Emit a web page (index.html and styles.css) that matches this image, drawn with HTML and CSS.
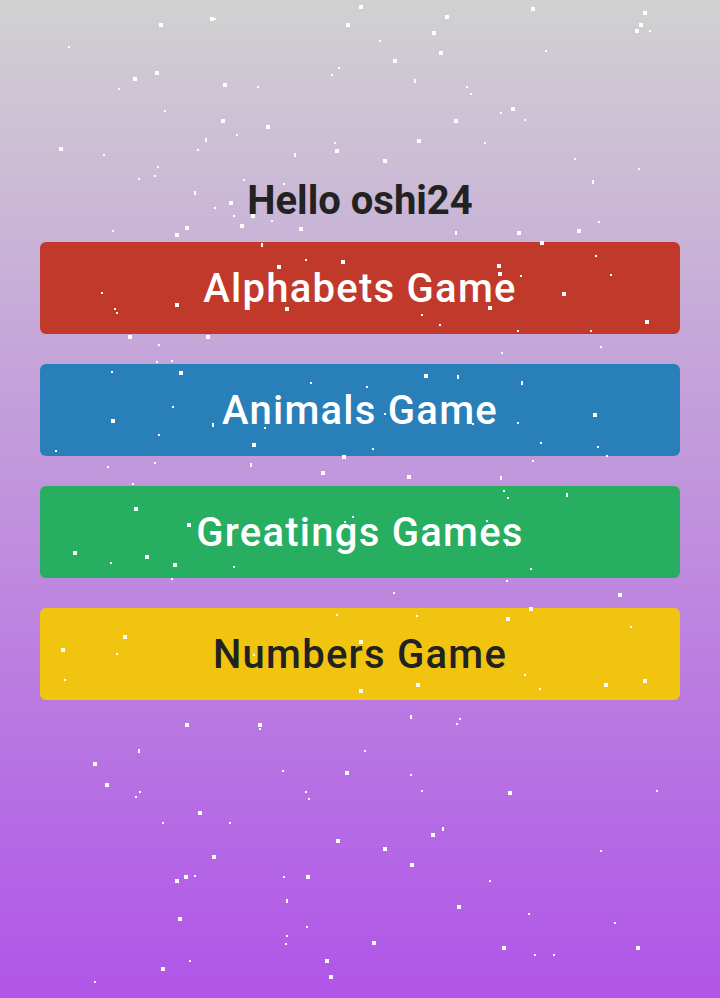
FILE: index.html
```html
<!DOCTYPE html>
<html lang="en">
<head>
<meta charset="utf-8">
<title>Games</title>
<link rel="stylesheet" href="styles.css">
</head>
<body>
<div class="snow" id="snow"></div>
<main class="page">
  <h1 class="title">Hello oshi24</h1>
  <nav class="menu">
    <button class="game game-red">Alphabets Game</button>
    <button class="game game-blue">Animals Game</button>
    <button class="game game-green">Greatings Games</button>
    <button class="game game-yellow">Numbers Game</button>
  </nav>
</main>
<script src="script.js"></script>
</body>
</html>
```
FILE: styles.css
```css
html, body {
  margin: 0;
  padding: 0;
}
body {
  min-height: 998px;
  background: linear-gradient(180deg, #d1d1d1 0%, #b055e8 100%);
  font-family: Roboto, "Noto Sans", "Liberation Sans", sans-serif;
  position: relative;
  overflow: hidden;
}
.page {
  padding: 177px 40px 0;
  display: flex;
  flex-direction: column;
  align-items: stretch;
}
.title {
  margin: 0 0 18px;
  text-align: center;
  font-size: 40px;
  font-weight: 700;
  line-height: 47px;
  color: #222222;
}
.menu {
  display: flex;
  flex-direction: column;
  gap: 30px;
}
.game {
  height: 92px;
  border: none;
  border-radius: 6px;
  font-family: Roboto, "Noto Sans", "Liberation Sans", sans-serif;
  font-size: 40px;
  font-weight: 500;
  letter-spacing: 1.25px;
  color: #ffffff;
  padding: 0;
}
.game-red { background: #c0392b; }
.game-blue { background: #2980b9; }
.game-green { background: #27ae60; }
.game-yellow { background: #f1c40f; color: #222222; }
.snow {
  position: absolute;
  inset: 0;
  pointer-events: none;
  z-index: 2;
}
.flake {
  position: absolute;
  width: 4px;
  height: 4px;
  background: #ffffff;
}
.flake.small {
  width: 2px;
  height: 2px;
}
.flake.tall {
  width: 2px;
  height: 4px;
}
```
FILE: script.js
```js
var flakes = [
  [159,23],[210,17],[214,18,"s"],[346,23],[359,5],[379,40,"s"],[432,31],[445,15],[439,51],[531,7],[545,50,"s"],[643,11],[639,23],[635,29],[649,30,"s"],[68,46,"s"],
  [133,77],[155,71],[118,88,"s"],[223,83],[257,86,"s"],[331,74,"s"],[338,67,"s"],[393,59],[414,79,"t"],[466,86,"s"],[470,93,"s"],[511,107],[500,112,"s"],[524,119,"s"],[164,110,"s"],[221,119],[266,125],[454,119],[484,142,"s"],[417,139],
  [205,138,"t"],[236,134,"s"],[59,147],[103,154,"s"],[157,166,"s"],[197,149,"s"],[138,178,"s"],[154,175,"s"],[294,153,"t"],[335,149],[334,142,"s"],[383,159],[574,158,"s"],[592,180,"t"],[638,168,"s"],[194,191,"t"],[243,179,"s"],[283,183,"s"],
  [229,201],[175,233],[185,226],[251,214],[240,224],[271,220,"s"],[299,227],[112,230,"s"],[455,231,"t"],[517,231],[540,241],[577,229],[598,221,"s"],[233,215,"s"],[214,207,"s"],
  [261,243,"t"],[277,265],[305,259,"s"],[341,260],[497,264],[498,272],[610,274,"s"],[101,292,"s"],[114,308,"s"],[116,312,"s"],[175,303],[285,307],[488,306],[562,292],[421,314,"s"],[439,324,"s"],[517,330,"s"],[590,330,"s"],[645,320],[595,255,"s"],[520,275,"s"],
  [128,335],[206,335],[158,344,"s"],[600,346,"s"],[156,361,"s"],[171,360,"s"],[501,352,"s"],
  [179,371],[111,371,"s"],[310,382,"s"],[366,386,"s"],[424,374],[457,375,"t"],[521,381,"t"],[172,406,"s"],[111,419],[212,423,"t"],[384,413,"s"],[472,423,"s"],[593,413],[158,434,"s"],[264,427,"s"],[517,422,"s"],[540,442,"s"],[252,443],[372,448,"s"],[55,450,"s"],[342,455],[597,446,"s"],[606,455,"s"],
  [107,466,"s"],[154,462,"s"],[250,463,"t"],[321,471],[407,475],[500,476,"t"],[532,460,"s"],[132,483,"s"],
  [503,490,"s"],[507,497,"s"],[566,493,"t"],[134,507],[187,523],[352,516,"s"],[344,521,"s"],[486,520,"s"],[73,551],[145,555],[173,563],[110,562,"s"],[233,566,"s"],[530,568,"s"],[506,544,"s"],
  [506,580,"s"],[618,593],[171,578,"s"],[393,592,"s"],
  [529,607],[336,614,"s"],[416,615,"s"],[506,617],[630,626,"s"],[123,635],[61,648],[359,640],[116,653,"s"],[253,654,"s"],[524,674,"s"],[604,683],[643,679],[64,679,"s"],[539,688,"s"],[416,683],[359,689],
  [410,715,"t"],[185,723],[258,723],[459,718,"s"],[456,723,"s"],[259,728,"s"],[138,749,"t"],[364,750,"s"],[93,762],[282,770,"s"],[345,771],[410,774,"s"],[105,783],[139,791,"s"],[135,796,"s"],[305,791,"s"],[308,798,"s"],[421,790,"s"],[508,791],[656,790,"s"],
  [198,811],[229,822,"s"],[162,822,"s"],[442,827,"t"],[431,833],[336,839],[383,847],[600,850,"s"],[212,855],[410,863],[175,879],[184,875],[194,875,"s"],[283,876,"s"],[306,875],[489,880,"s"],
  [286,899,"t"],[457,905],[528,913,"s"],[178,917],[614,922,"s"],[306,926,"s"],[286,935,"s"],[372,941],[285,943,"s"],[502,946],[636,946],[553,954,"s"],[534,954,"s"],[325,959],[189,960,"s"],[161,967],[329,975],[94,981,"s"]
];
var snow = document.getElementById("snow");
flakes.forEach(function (f) {
  var d = document.createElement("div");
  d.className = "flake" + (f[2] === "s" ? " small" : f[2] === "t" ? " tall" : "");
  d.style.left = f[0] + "px";
  d.style.top = f[1] + "px";
  snow.appendChild(d);
});
```
